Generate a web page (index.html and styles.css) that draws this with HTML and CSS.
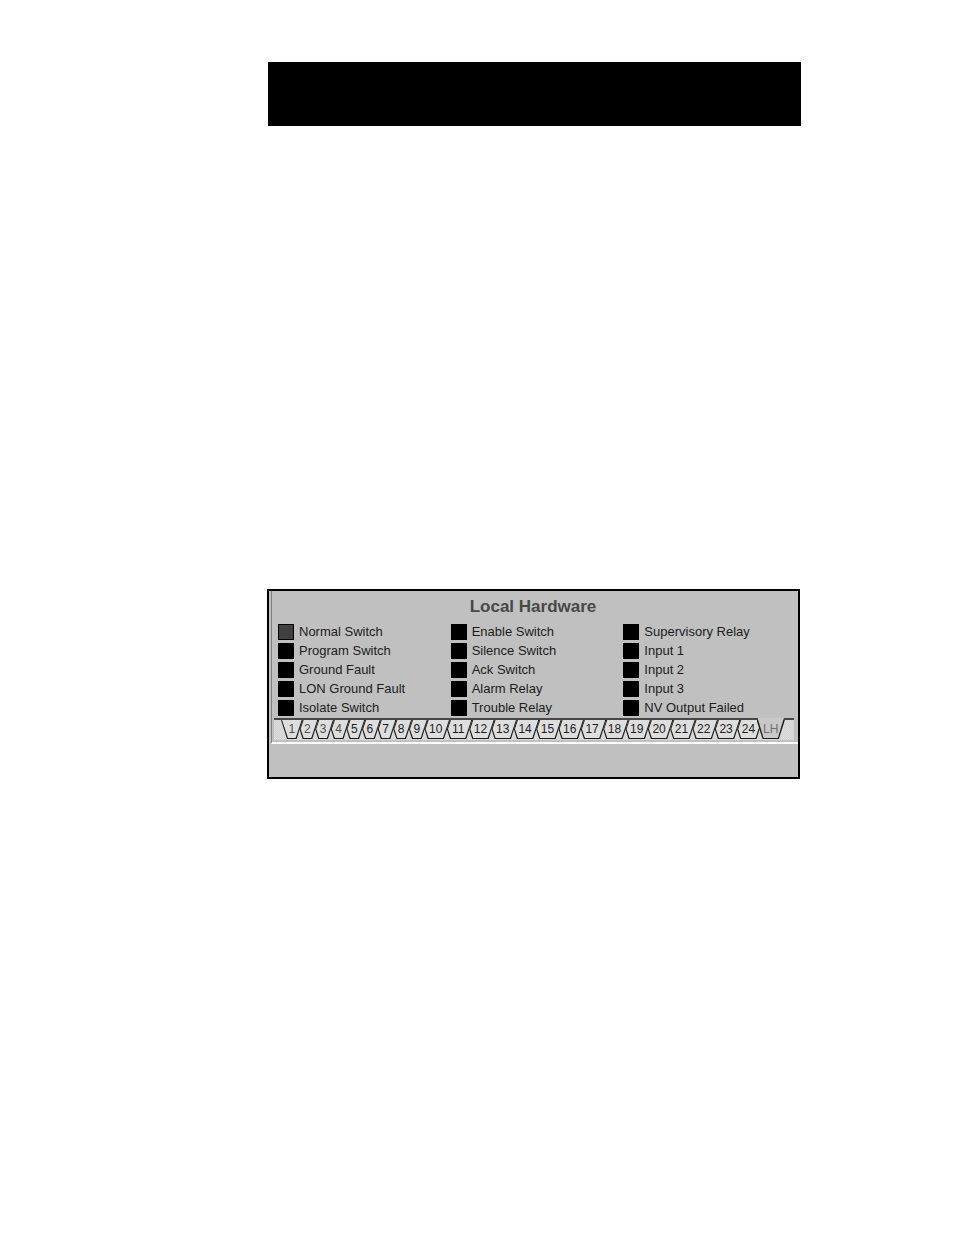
FILE: index.html
```html
<!DOCTYPE html>
<html lang="en">
<head>
  <meta charset="UTF-8">
  <meta name="viewport" content="width=device-width, initial-scale=1.0">
  <title>Local Hardware</title>
  <link rel="stylesheet" href="styles.css">
</head>
<body>
  <header class="banner"></header>

  <main class="panel">
    <section class="sheet">
      <h1>Local Hardware</h1>
      <ul class="points">
        <li class="on">Normal Switch</li>
        <li>Program Switch</li>
        <li>Ground Fault</li>
        <li>LON Ground Fault</li>
        <li>Isolate Switch</li>
        <li>Enable Switch</li>
        <li>Silence Switch</li>
        <li>Ack Switch</li>
        <li>Alarm Relay</li>
        <li>Trouble Relay</li>
        <li>Supervisory Relay</li>
        <li>Input 1</li>
        <li>Input 2</li>
        <li>Input 3</li>
        <li>NV Output Failed</li>
      </ul>
      <nav class="tabs">
        <button class="short dim">1</button>
        <button class="short dim">2</button>
        <button class="short dim">3</button>
        <button class="short dim">4</button>
        <button class="short">5</button>
        <button class="short">6</button>
        <button class="short">7</button>
        <button class="short">8</button>
        <button class="short">9</button>
        <button>10</button>
        <button>11</button>
        <button>12</button>
        <button>13</button>
        <button>14</button>
        <button>15</button>
        <button>16</button>
        <button>17</button>
        <button>18</button>
        <button>19</button>
        <button>20</button>
        <button>21</button>
        <button>22</button>
        <button>23</button>
        <button>24</button>
        <button class="active">LH</button>
      </nav>
    </section>
  </main>
</body>
</html>
```
FILE: styles.css
```css
body {
  margin: 0;
  padding: 62px 153px 0 267px;
  background: #fff;
  font-family: "Liberation Sans", Arial, sans-serif;
  color: #1c1c1c;
}
.banner {
  height: 64px;
  margin: 0 0 463px 1px;
  background: #000;
}
.panel {
  margin-right: 1px;
  padding: 0 0 33px 2px;
  background: #c0c0c0;
  border: 2px solid #000;
}
.sheet {
  padding-bottom: 2px;
  border-left: 1px solid #808080;
  border-bottom: 2px solid #fff;
}
h1 {
  margin: 0;
  padding: 4px 4px 3px 0;
  font-size: 17px;
  line-height: 24px;
  text-align: center;
  color: #484848;
}
.points {
  display: grid;
  grid-template-columns: repeat(3, 1fr);
  grid-template-rows: repeat(5, 19px);
  grid-auto-flow: column;
  margin: 0;
  padding: 0 2px 1px 6px;
  list-style: none;
  font-size: 13px;
}
.points li {
  display: flex;
  align-items: center;
  gap: 5px;
  white-space: nowrap;
}
.points li::before {
  content: "";
  box-sizing: border-box;
  width: 16px;
  height: 16px;
  background: #000;
  border: 1px solid #000;
}
.points .on::before {
  background: #404040;
}

/* sheet tabs hanging under the list */
.tabs {
  display: flex;
  margin: 0 4px 0 2px;
  padding: 0 12px 0 10px;
  background: repeating-conic-gradient(#d2d2d2 0 25%, #dedede 0 50%) 0 0 / 2px 2px;
  border-top: 2px solid #484848;
}
.tabs button {
  position: relative;
  flex: 10 1 0;
  min-width: 0;
  height: 20px;
  padding: 0 0 2px;
  border: none;
  background: none;
  color: #1c1c1c;
  font-family: inherit;
  font-size: 12px;
  line-height: 16px;
  z-index: 0;
}
.tabs .short {
  flex-grow: 7;
}
.tabs .dim {
  color: #505050;
}
/* dark shape first, lighter one 1px inside it */
.tabs button::before,
.tabs button::after {
  content: "";
  position: absolute;
  z-index: -1;
  top: 0;
  bottom: 1px;
  left: -3px;
  right: -3px;
  background: #1c1c1c;
  clip-path: polygon(6px 0, 3px 50%, 6px 100%, calc(100% - 6px) 100%, 100% 0);
}
.tabs button::after {
  bottom: 2px;
  left: -2px;
  right: -2px;
  background: #dedede;
}
.tabs button:first-child::before,
.tabs button:first-child::after,
.tabs .active::before,
.tabs .active::after {
  clip-path: polygon(0 0, 6px 100%, calc(100% - 6px) 100%, 100% 0);
}
.tabs .active {
  color: #707070;
}
.tabs .active::after {
  top: -2px;
  background: #c8c8c8;
}
```
